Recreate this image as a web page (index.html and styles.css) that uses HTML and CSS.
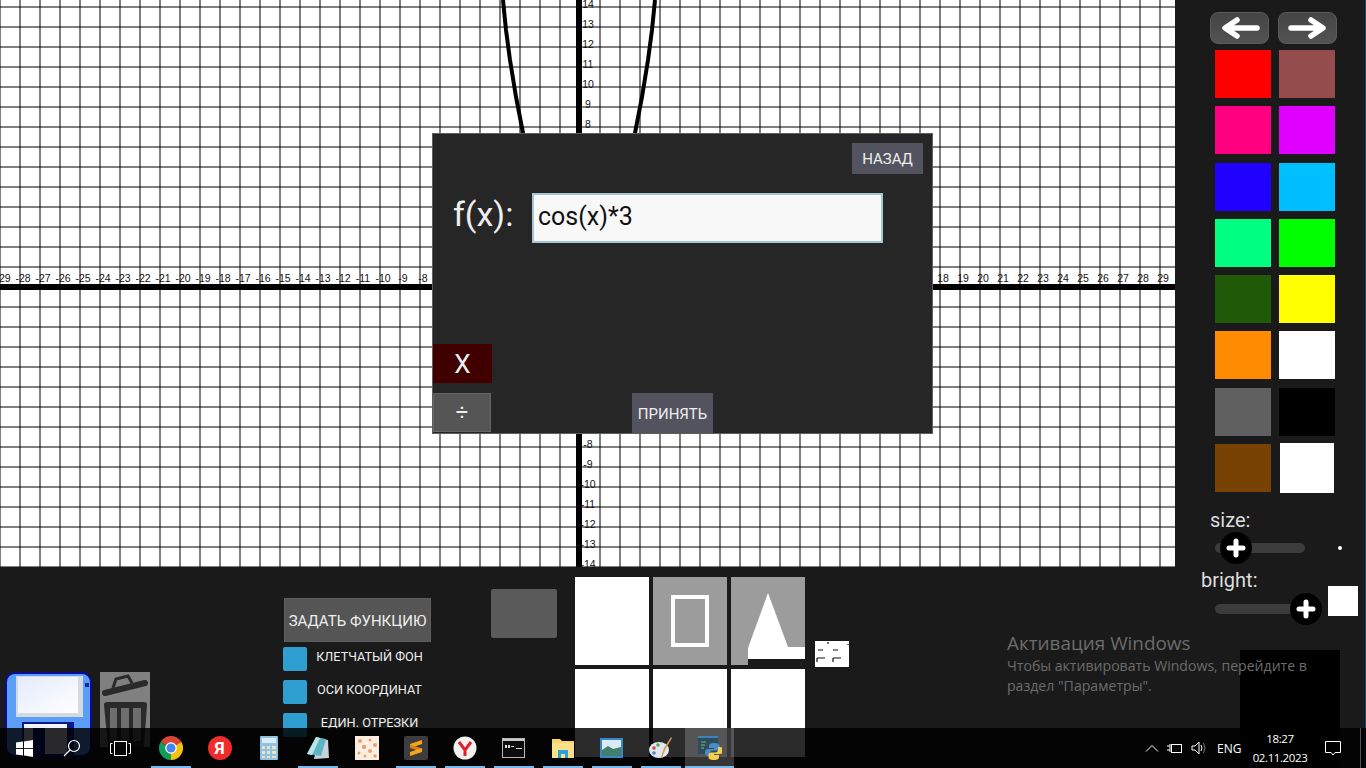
FILE: index.html
```html
<!DOCTYPE html>
<html lang="en">
<head>
  <meta charset="UTF-8" />
  <title>Graph</title>
  <link rel="stylesheet" href="styles.css">
</head>
<body>
  <div class="app">
    <main class="graph" id="graph">
      <div class="axis-x"></div>
      <div class="axis-y"></div>
      <svg class="curve" width="1175" height="567" viewBox="0 0 1175 567">
        <polyline points="503,0 506,30 510,60 516,97 523,133 535,190" />
        <polyline points="655,0 652,30 648,60 642,97 635,133 623,190" />
      </svg>

      <section class="dialog">
        <div class="dialog-top"><button class="btn-slate btn-back">НАЗАД</button></div>
        <div class="field">
          <span class="field-label">f(x):</span>
          <div class="field-input">cos(x)*3</div>
        </div>
        <div class="dialog-foot">
          <div class="ops">
            <button class="btn-x">X</button>
            <button class="btn-div">÷</button>
          </div>
          <button class="btn-slate btn-ok">ПРИНЯТЬ</button>
        </div>
      </section>
    </main>

    <aside class="sidebar">
      <div class="arrows">
        <button class="arrow-btn">
          <svg width="40" height="24" viewBox="0 0 40 24"><path d="M37 12H8M17 4 5 12l12 8" /></svg>
        </button>
        <button class="arrow-btn">
          <svg width="40" height="24" viewBox="0 0 40 24"><path d="M3 12h29M23 4l12 8-12 8" /></svg>
        </button>
      </div>
      <div class="swatches">
        <div class="swatch c-red"></div><div class="swatch c-rose"></div>
        <div class="swatch c-pink"></div><div class="swatch c-violet"></div>
        <div class="swatch c-blue"></div><div class="swatch c-sky"></div>
        <div class="swatch c-mint"></div><div class="swatch c-green"></div>
        <div class="swatch c-forest"></div><div class="swatch c-yellow"></div>
        <div class="swatch c-orange"></div><div class="swatch c-white"></div>
        <div class="swatch c-gray"></div><div class="swatch c-black"></div>
        <div class="swatch c-brown"></div><div class="swatch c-white swatch-last"></div>
      </div>
      <div class="side-label size-label">size:</div>
      <div class="slider-row">
        <div class="track">
          <div class="knob knob-size"><svg width="20" height="20" viewBox="0 0 20 20"><path d="M10 3v14M3 10h14" /></svg></div>
        </div>
        <div class="size-dot"></div>
      </div>
      <div class="side-label bright-label">bright:</div>
      <div class="slider-row bright-row">
        <div class="track">
          <div class="knob knob-bright"><svg width="20" height="20" viewBox="0 0 20 20"><path d="M10 3v14M3 10h14" /></svg></div>
        </div>
        <div class="bright-box"></div>
      </div>
      <div class="black-box"></div>
    </aside>

    <section class="tools">
      <div class="file-icons">
        <svg class="save-icon" width="87" height="85" viewBox="0 0 87 85">
          <defs>
            <linearGradient id="label" x1="0" y1="0" x2="1" y2="1">
              <stop offset="0" stop-color="#e4ebfb" />
              <stop offset="1" stop-color="#ffffff" />
            </linearGradient>
          </defs>
          <rect x="1" y="1" width="85" height="83" rx="9" fill="#5a9ef8" stroke="#0a0a9c" stroke-width="2" />
          <rect x="11" y="4" width="67" height="41" fill="#d5d9e0" />
          <rect x="13" y="5" width="60" height="36" fill="url(#label)" />
          <rect x="80" y="11" width="4" height="4" fill="#0a2a9c" />
          <rect x="17" y="50" width="52" height="34" fill="#0a1a8c" />
          <rect x="19" y="52" width="43" height="30" fill="#f0f4ff" />
          <rect x="28" y="56" width="12" height="26" fill="#0a1a8c" />
        </svg>
        <svg class="trash-icon" width="50" height="75" viewBox="0 0 50 75">
          <rect width="50" height="75" fill="#808080" />
          <path d="M5 21 45 11" fill="none" stroke="#2a2a2a" stroke-width="6" stroke-linecap="round" />
          <path d="M13 16 16 7 28 4 32 11" fill="none" stroke="#2a2a2a" stroke-width="3" />
          <path d="M4 33q0-3 3-3h37q3 0 3 3l-3 42H8z" fill="#2a2a2a" />
          <g fill="#6e6e6e">
            <rect x="10" y="36" width="7" height="33" />
            <rect x="21" y="36" width="8" height="33" />
            <rect x="33" y="36" width="8" height="33" />
          </g>
        </svg>
      </div>
      <div class="options">
        <button class="btn-func">ЗАДАТЬ ФУНКЦИЮ</button>
        <div class="option"><span class="check"></span><span class="option-text">КЛЕТЧАТЫЙ ФОН</span></div>
        <div class="option"><span class="check"></span><span class="option-text">ОСИ КООРДИНАТ</span></div>
        <div class="option"><span class="check"></span><span class="option-text">ЕДИН. ОТРЕЗКИ</span></div>
      </div>
      <div class="blank-btn"></div>
      <div class="tiles">
        <div class="tile"></div>
        <div class="tile tile-gray"><div class="rect-shape"></div></div>
        <div class="tile tile-clear">
          <svg width="74" height="88" viewBox="0 0 74 88">
            <path d="M0 0h74v70H17v18H0z" fill="#9c9c9c" />
            <path d="M37 16 17 71v11h57V70H57z" fill="#fff" />
          </svg>
        </div>
        <div class="tile"></div>
        <div class="tile"></div>
        <div class="tile"></div>
      </div>
      <svg class="mini-tile" width="34" height="26" viewBox="0 0 34 26">
        <rect width="34" height="26" fill="#fff" />
        <path d="M3 9h5M18 9h5M2 17h8M18 17h8M2 17v4M18 17v4M13 1v2M33 3v1" stroke="#111" stroke-width="1.2" />
      </svg>
    </section>
  </div>

  <div class="activation">
    <div class="activation-title">Активация Windows</div>
    <div class="activation-text">Чтобы активировать Windows, перейдите в<br>раздел "Параметры".</div>
  </div>

  <footer class="taskbar">
    <div class="task-slot">
      <svg width="17" height="17" viewBox="0 0 17 17"><path fill="#fff" d="M0 2.600 7 1.600v6.400H0zM8 1.500 17 0v8H8zM0 9h7v6.400l-7-1zM8 9h9v8l-9-1.400z" /></svg>
    </div>
    <div class="task-slot">
      <svg width="18" height="18" viewBox="0 0 18 18" fill="none" stroke="#fff" stroke-width="1.200"><circle cx="11" cy="7" r="5.500" /><path d="M7 11 1 17" /></svg>
    </div>
    <div class="task-slot">
      <svg width="21" height="15" viewBox="0 0 21 15" fill="none" stroke="#fff"><rect x="4.500" y="0.500" width="12" height="14" /><path d="M2.500 2.500H.5v10h2M18.500 2.500h2v10h-2" /></svg>
    </div>
    <div class="task-apps">
      <div class="app-slot open">
        <svg width="24" height="24" viewBox="0 0 24 24">
          <path d="M12 12 1.600 6A12 12 0 0 1 22.400 6z" fill="#db4437" />
          <path d="M12 12 1.600 6A12 12 0 0 0 12 24z" fill="#0f9d58" />
          <path d="M12 12 22.400 6A12 12 0 0 1 12 24z" fill="#f4c20d" />
          <circle cx="12" cy="12" r="5.800" fill="#fff" />
          <circle cx="12" cy="12" r="4.500" fill="#4285f4" />
        </svg>
      </div>
      <div class="app-slot">
        <div class="ya-badge">Я</div>
      </div>
      <div class="app-slot">
        <svg width="18" height="24" viewBox="0 0 18 24">
          <rect width="18" height="24" rx="1" fill="#8fc3e3" />
          <rect x="2" y="2" width="14" height="5" fill="#d9eef8" />
          <path d="M2 10h3v3H2zm5 0h3v3H7zm5 0h4v3h-4zM2 15h3v3H2zm5 0h3v3H7zm5 0h4v3h-4zM2 20h3v2H2zm5 0h3v2H7zm5 0h4v2h-4z" fill="#e9e2c4" />
        </svg>
      </div>
      <div class="app-slot open">
        <svg width="24" height="24" viewBox="0 0 24 24">
          <path d="M12 3 22 4l1 18-15 1z" fill="#c9d2d6" />
          <path d="M10 1 20 3 15 20 1 18z" fill="#5cb5c4" />
          <path d="M10 1 14 2 6 19 1 18z" fill="#b8e4ea" />
        </svg>
      </div>
      <div class="app-slot">
        <svg width="24" height="24" viewBox="0 0 24 24">
          <rect width="24" height="24" fill="#fbeee0" />
          <g fill="#eaa172">
            <circle cx="5" cy="5" r="2" /><circle cx="15" cy="4" r="1.500" /><circle cx="20" cy="9" r="2" />
            <circle cx="9" cy="11" r="2.200" /><circle cx="4" cy="17" r="1.500" /><circle cx="15" cy="15" r="2" />
            <circle cx="10" cy="20" r="1.500" /><circle cx="20" cy="20" r="1.800" />
          </g>
          <path d="M11 6h3v2h-3zM17 12h3v2h-3zM6 13h2v2H6z" fill="#fff" />
        </svg>
      </div>
      <div class="app-slot open">
        <svg width="24" height="24" viewBox="0 0 24 24">
          <rect width="24" height="24" rx="2" fill="#3d3d3d" />
          <path d="M18 4v4L6 12V8z" fill="#f9a51f" />
          <path d="M6 8.500 18 12.500V16L6 12z" fill="#d98412" />
          <path d="M18 12v4L6 20v-4z" fill="#f9a51f" />
        </svg>
      </div>
      <div class="app-slot open">
        <svg width="24" height="24" viewBox="0 0 24 24">
          <circle cx="12" cy="12" r="11.500" fill="#f2f2f2" />
          <path d="M6 6l6 8 6-8M12 13v7" fill="none" stroke="#e0202c" stroke-width="3" />
        </svg>
      </div>
      <div class="app-slot open">
        <svg width="23" height="20" viewBox="0 0 23 20">
          <rect x="0.500" y="0.500" width="22" height="19" fill="#0c0c0c" stroke="#b9b9b9" />
          <rect x="1" y="1" width="21" height="2" fill="#c9c9c9" />
          <path d="M3 7h2v3H3zm3 0h2v3H6zm3 1h3v1H9zM14 10h6v1h-6z" fill="#ddd" />
        </svg>
      </div>
      <div class="app-slot open">
        <svg width="22" height="20" viewBox="0 0 22 20">
          <path d="M0 1h8l2 2h12v17H0z" fill="#f6d36b" />
          <path d="M0 5h22v15H0z" fill="#fbe08a" />
          <path d="M6 12h10v8h-3v-4H9v4H6z" fill="#2a9fd8" />
        </svg>
      </div>
      <div class="app-slot open">
        <svg width="23" height="20" viewBox="0 0 23 20">
          <rect width="23" height="20" fill="#3d86c6" />
          <rect x="2" y="2" width="19" height="16" fill="#d8ecf6" />
          <path d="M2 12l6-4 5 3 8-2v9H2z" fill="#3f7f6c" />
        </svg>
      </div>
      <div class="app-slot open">
        <svg width="24" height="24" viewBox="0 0 24 24">
          <ellipse cx="10" cy="14" rx="10" ry="8" fill="#dfe8ee" />
          <circle cx="5" cy="12" r="1.800" fill="#d9473a" />
          <circle cx="9" cy="9" r="1.800" fill="#4caf50" />
          <circle cx="5" cy="17" r="1.800" fill="#3f88d0" />
          <path d="M22 1l1 1-7 12-3 8-1-1 3-9z" fill="#d99a4a" />
        </svg>
      </div>
      <div class="app-slot open active">
        <svg width="24" height="24" viewBox="0 0 24 24">
          <rect width="20" height="18" fill="#2d4a5e" />
          <rect width="20" height="2" fill="#3d83b5" />
          <path d="M3 6h5M3 9h4M3 12h3" stroke="#6fbf6f" />
          <path d="M16 7c-4 0-5 1-5 3v2h5v1H10c-2 0-3 1.500-3 3.500S8 20 10 20h2v-2.500c0-2 1-3 3-3h4c1.500 0 2.500-1 2.500-2.500v-2C21.500 8 20 7 16 7z" fill="#4a8cc2" />
          <path d="M16 7c-4 0-5 1-5 3v2h5v1H10c-2 0-3 1.500-3 3.500S8 20 10 20h2v-2.500c0-2 1-3 3-3h4c1.500 0 2.500-1 2.500-2.500v-2C21.500 8 20 7 16 7z" transform="rotate(180 16 15.500)" fill="#f6d04d" />
        </svg>
      </div>
    </div>
    <div class="tray">
      <svg width="14" height="8" viewBox="0 0 14 8" fill="none" stroke="#fff"><path d="M1 7.500 7 1.500l6 6" /></svg>
      <svg width="16" height="11" viewBox="0 0 16 11" fill="none" stroke="#fff"><rect x="4.500" y="1.500" width="10" height="8" /><path d="M0 3h3M0 7h3M3 1v8" /></svg>
      <svg width="16" height="14" viewBox="0 0 16 14" fill="none" stroke="#fff"><path d="M1 5h3l4-4v12L4 9H1z" /><path d="M10 4q2 3 0 6" /><path d="M12.500 2q3 5 0 10" stroke="#777" /></svg>
      <span class="tray-lang">ENG</span>
      <div class="clock"><div>18:27</div><div>02.11.2023</div></div>
      <svg class="notify" width="16" height="15" viewBox="0 0 16 15" fill="none" stroke="#fff"><path d="M.5.500h15v11H10l-2 2.500-2-2.500H.5z" /></svg>
    </div>
  </footer>

  <script src="graph.js"></script>
</body>
</html>
```

FILE: styles.css
```css
* {
  box-sizing: border-box;
}
body {
  margin: 0;
  width: 1366px;
  height: 768px;
  overflow: hidden;
  position: relative;
  background: #1a1a1a;
  font-family: Roboto, "Liberation Sans", sans-serif;
  color: #eee;
}
button {
  font-family: inherit;
  border: 0;
  padding: 0;
  color: #eee;
}
.app {
  display: grid;
  grid-template-columns: 1175px 191px;
  grid-template-rows: 567px 201px;
  height: 768px;
}

/* graph */
.graph {
  position: relative;
  overflow: hidden;
  background-color: #fff;
  background-image:
    linear-gradient(to right, rgba(0,0,0,.5) 2px, transparent 2px),
    linear-gradient(to bottom, rgba(0,0,0,.5) 2px, transparent 2px);
  background-size: 20px 20px;
  background-position: 19px 6px;
}
.axis-x {
  position: absolute;
  left: 0;
  right: 0;
  top: 284px;
  height: 6px;
  background: #000;
}
.axis-y {
  position: absolute;
  top: 0;
  bottom: 0;
  left: 576px;
  width: 6px;
  background: #000;
}
.curve {
  position: absolute;
  left: 0;
  top: 0;
}
.curve polyline {
  fill: none;
  stroke: #000;
  stroke-width: 4;
}
.tick {
  position: absolute;
  font-family: "Liberation Sans", sans-serif;
  font-size: 10.5px;
  line-height: 12px;
  color: #111;
  transform: translate(-50%, -50%);
}

/* dialog */
.dialog {
  position: absolute;
  left: 432px;
  top: 133px;
  width: 501px;
  height: 301px;
  background: #262626;
  border: 1px solid #5e5e5e;
  display: flex;
  flex-direction: column;
}
.dialog-top {
  display: flex;
  justify-content: flex-end;
  padding: 9px 9px 0 0;
}
.btn-slate {
  background: #53535f;
  font-size: 15px;
}
.btn-back {
  width: 71px;
  height: 31px;
}
.field {
  display: flex;
  align-items: flex-start;
  margin-top: 19px;
  padding-left: 20px;
}
.field-label {
  width: 79px;
  font-size: 34px;
  line-height: 42px;
}
.field-input {
  width: 351px;
  height: 50px;
  background: #f8f8f8;
  border: 2px solid #a3c6d2;
  padding: 6px 4px;
  color: #111;
  font-size: 25px;
  line-height: 32px;
}
.dialog-foot {
  margin-top: auto;
  display: flex;
  align-items: flex-end;
}
.ops {
  display: flex;
  flex-direction: column;
  gap: 10px;
  margin-bottom: 1px;
}
.btn-x {
  width: 59px;
  height: 39px;
  background: #400000;
  font-size: 26px;
}
.btn-div {
  width: 58px;
  height: 39px;
  background: #555;
  border: 1px solid #666;
  font-size: 22px;
}
.btn-ok {
  width: 81px;
  height: 40px;
  margin-left: 140px;
  padding-top: 1px;
}

/* right side */
.sidebar {
  grid-column: 2;
  grid-row: 1 / 3;
  background: #1a1a1a;
  border-right: 1px solid #0d4a78;
  overflow: hidden;
}
.arrows {
  display: flex;
  gap: 9px;
  padding: 12px 0 0 35px;
}
.arrow-btn {
  width: 59px;
  height: 32px;
  border-radius: 8px;
  background: linear-gradient(#454545, #525252);
  border: 1px solid #5a5a5a;
  display: flex;
  align-items: center;
  justify-content: center;
}
.arrow-btn path {
  fill: none;
  stroke: #fff;
  stroke-width: 5.5;
  stroke-linecap: round;
  stroke-linejoin: round;
}
.swatches {
  display: grid;
  grid-template-columns: 56px 56px;
  grid-auto-rows: 48px;
  column-gap: 8px;
  row-gap: 8.25px;
  margin: 6px 0 0 40px;
}
.swatch-last {
  margin: -1px 1px 0;
  height: 50px;
}
.c-red { background: #ff0000; }
.c-rose { background: #954c4c; }
.c-pink { background: #ff0080; }
.c-violet { background: #df00ff; }
.c-blue { background: #2000ff; }
.c-sky { background: #00bfff; }
.c-mint { background: #00ff80; }
.c-green { background: #00ff00; }
.c-forest { background: #1e5a08; }
.c-yellow { background: #ffff00; }
.c-orange { background: #ff8c00; }
.c-white { background: #fff; }
.c-gray { background: #606060; }
.c-black { background: #000; }
.c-brown { background: #784205; }
.side-label {
  font-size: 20px;
  line-height: 24px;
  color: #ddd;
}
.size-label {
  margin: 16.25px 0 0 35px;
}
.bright-label {
  margin: 4px 0 0 26px;
}
.slider-row {
  display: flex;
  align-items: center;
  height: 32px;
  padding-left: 40px;
}
.bright-row {
  margin-top: 1px;
}
.track {
  position: relative;
  width: 90px;
  height: 10px;
  border-radius: 5px;
  background: #3c3c3c;
}
.knob {
  position: absolute;
  top: -11px;
  width: 32px;
  height: 32px;
  border-radius: 50%;
  background: #000;
  display: flex;
  align-items: center;
  justify-content: center;
}
.knob path {
  fill: none;
  stroke: #fff;
  stroke-width: 5;
  stroke-linecap: round;
}
.knob-size {
  left: 5px;
}
.knob-bright {
  left: 75px;
}
.size-dot {
  width: 4px;
  height: 4px;
  margin-left: 33px;
  border-radius: 50%;
  background: #fff;
}
.bright-box {
  width: 30px;
  height: 30px;
  margin: -16px 0 0 23px;
  background: #fff;
}
.black-box {
  width: 100px;
  height: 118px;
  margin: 25px 0 0 65px;
  background: #000;
}

/* bottom tools */
.tools {
  grid-column: 1;
  grid-row: 2;
  background: #1a1a1a;
  display: flex;
  align-items: flex-start;
  overflow: hidden;
}
.file-icons {
  display: flex;
  gap: 8px;
  width: 284px;
  padding: 105px 0 0 5px;
}
.options {
  width: 207px;
  padding-top: 31px;
}
.btn-func {
  display: block;
  width: 147px;
  height: 44px;
  background: #555;
  border: 1px solid #5e5e5e;
  font-size: 15px;
  padding-top: 1px;
  white-space: nowrap;
}
.option {
  display: flex;
  align-items: center;
  width: 148px;
  height: 24px;
  margin-top: 9px;
}
.option:first-of-type {
  margin-top: 5px;
}
.check {
  flex: none;
  width: 24px;
  height: 24px;
  margin-left: -1px;
  border-radius: 2px;
  background: #2e9fd0;
}
.option-text {
  flex: 1;
  margin-top: -6px;
  text-align: center;
  font-size: 12.7px;
  white-space: nowrap;
}
.blank-btn {
  width: 66px;
  height: 49px;
  margin-top: 22px;
  border-radius: 2px;
  background: #5a5a5a;
}
.tiles {
  display: grid;
  grid-template-columns: repeat(3, 74px);
  grid-auto-rows: 88px;
  gap: 4px;
  margin: 10px 0 0 18px;
}
.tile {
  background: #fff;
}
.tile-gray {
  background: #9c9c9c;
  display: flex;
  align-items: center;
  justify-content: center;
}
.tile-clear {
  background: none;
}
.tile-clear svg {
  display: block;
}
.rect-shape {
  width: 38px;
  height: 52px;
  border: 4px solid #fff;
}
.mini-tile {
  margin: 74px 0 0 10px;
}

/* windows bits */
.activation {
  position: absolute;
  left: 1007px;
  top: 630px;
  font-family: "Open Sans", "Noto Sans", sans-serif;
  color: #6c6c6c;
  white-space: nowrap;
}
.activation-title {
  font-size: 18.9px;
  line-height: 26px;
}
.activation-text {
  font-size: 14.1px;
  line-height: 20px;
}
.taskbar {
  position: absolute;
  left: 0;
  bottom: 0;
  width: 1366px;
  height: 40px;
  display: flex;
  background: rgba(0,0,0,.83);
}
.task-slot {
  width: 48px;
  height: 40px;
  display: flex;
  align-items: center;
  justify-content: center;
}
.task-apps {
  display: flex;
  margin-left: 2px;
}
.app-slot {
  position: relative;
  width: 49px;
  height: 40px;
  display: flex;
  align-items: center;
  justify-content: center;
}
.app-slot.open::after {
  content: "";
  position: absolute;
  left: 5px;
  right: 4px;
  bottom: 0;
  height: 2px;
  background: #76b9ed;
}
.app-slot.active {
  background: rgba(255,255,255,.2);
}
.app-slot.active::after {
  left: 0;
  right: 0;
}
.ya-badge {
  width: 24px;
  height: 24px;
  border-radius: 50%;
  background: #f02b2b;
  color: #fff;
  font-size: 17px;
  font-weight: 700;
  line-height: 24px;
  text-align: center;
}
.tray {
  display: flex;
  align-items: center;
  margin-left: auto;
  margin-right: 5px;
  width: 226px;
  padding-left: 10px;
  font-family: "Open Sans", "Noto Sans", sans-serif;
  font-size: 12px;
  color: #fff;
  border-right: 1px solid #555;
  gap: 8px;
}
.tray-lang {
  margin-left: 2px;
  width: 24px;
}
.clock {
  width: 62px;
  text-align: center;
  font-size: 11.5px;
  letter-spacing: -.4px;
  line-height: 19px;
  white-space: nowrap;
}
.notify {
  margin-left: 6px;
}
```

FILE: graph.js
```js
const graph = document.getElementById('graph');
const dialog = document.querySelector('.dialog');

function addTick(text, x, y) {
  const tick = document.createElement('span');
  tick.className = 'tick';
  tick.textContent = text;
  tick.style.left = x + 'px';
  tick.style.top = y + 'px';
  graph.insertBefore(tick, dialog);
}

// ticks from -7 to 17 and from -7 to 7 are covered by the dialog
for (let i = -29; i <= 29; i++) {
  if (i < -7 || i > 17) addTick(i, 580 + i * 20 + 3, 278);
}

for (let i = -14; i <= 14; i++) {
  if (i < -7 || i > 7) addTick(i, 588, 286 - i * 20 - 2);
}
```
